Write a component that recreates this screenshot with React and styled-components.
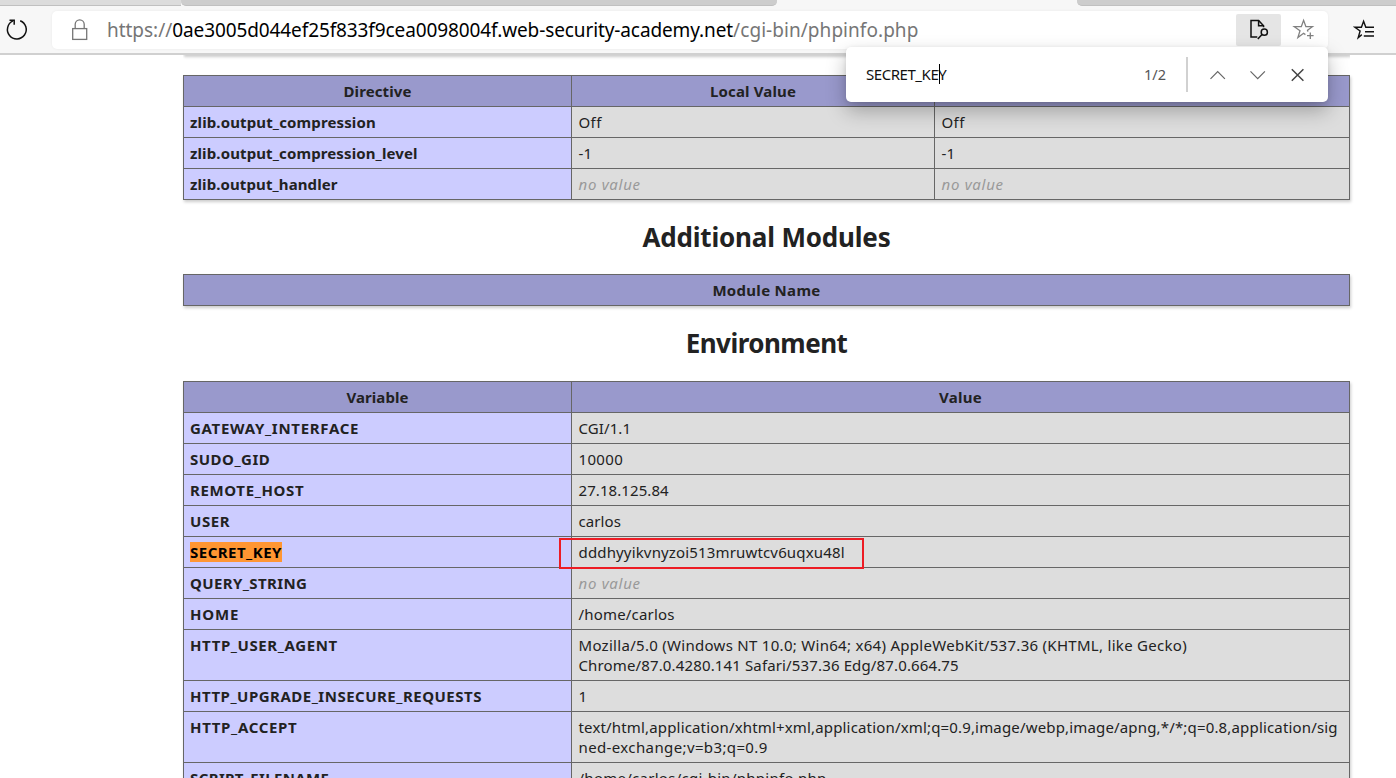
import React from 'react';
import styled, { createGlobalStyle } from 'styled-components';

const GlobalStyle = createGlobalStyle`
  * { box-sizing: border-box; }
  body {
    margin: 0;
    background: #fff;
    color: #222;
    font: 15px/20px "Noto Sans", "Open Sans", sans-serif;
    overflow: hidden;
  }
`;

const Browser = styled.div`
  width: 1396px;
  height: 778px;
  display: flex;
  flex-direction: column;
  overflow: hidden;
  position: relative;
`;

const TabStrip = styled.div`
  flex: none;
  height: 6px;
  display: flex;
  background: #f7f7f7;
`;

const Tab = styled.div`
  width: ${(p) => p.$width};
  height: 6px;
  background: ${(p) => p.$color};
  border-bottom: 1px solid ${(p) => p.$edge || '#c0c0c0'};
  border-radius: ${(p) => p.$radius || 0};
`;

const Toolbar = styled.header`
  flex: none;
  height: 49px;
  display: flex;
  align-items: flex-start;
  padding: 5px 0 0 5px;
  background: #f7f7f7;
  border-bottom: 2px solid #d0d0d0;
`;

const AddressBar = styled.div`
  width: 1276px;
  height: 38px;
  margin-left: 23px;
  padding: 0 12px 0 18px;
  display: flex;
  align-items: center;
  background: #fff;
  border-radius: 5px;
  box-shadow: 0 0 3px rgba(0, 0, 0, 0.06);
`;

const Url = styled.div`
  flex: 1;
  margin-left: 17px;
  font-size: 19px;
  line-height: 26px;
  white-space: nowrap;
  color: #767676;
`;

const UrlPart = styled.span`
  letter-spacing: ${(p) => p.$spacing}px;
  color: ${(p) => (p.$host ? '#000' : 'inherit')};
`;

const FindToggle = styled.div`
  width: 45px;
  height: 32px;
  margin-right: 11px;
  display: flex;
  align-items: center;
  justify-content: center;
  background: #e5e5e5;
  border-radius: 2px;
`;

const ReloadIcon = styled.svg`
  flex: none;
  margin-top: 7px;
`;

const FavoritesIcon = styled.svg`
  flex: none;
  margin: 8px 0 0 25px;
`;

const FindBar = styled.div`
  position: absolute;
  z-index: 2;
  left: 846px;
  top: 47px;
  width: 482px;
  height: 55px;
  padding: 0 20px;
  display: flex;
  align-items: center;
  background: #fff;
  border-radius: 5px;
  box-shadow: 0 9px 20px rgba(0, 0, 0, 0.28), 0 1px 4px rgba(0, 0, 0, 0.1);
`;

const FindText = styled.div`
  position: relative;
  flex: 1;
  padding-bottom: 2px;
  color: #111;
  font-size: 15px;
  letter-spacing: -0.45px;
`;

const Caret = styled.i`
  position: absolute;
  left: 73px;
  top: 0;
  width: 1px;
  height: 20px;
  background: #000;
`;

const FindCount = styled.div`
  padding-bottom: 2px;
  color: #555;
  font-size: 14.5px;
`;

const FindDivider = styled.div`
  width: 2px;
  height: 35px;
  margin: 0 20px;
  background: #d1d1d1;
`;

const FindActions = styled.div`
  display: flex;
  gap: 20px;
`;

const Page = styled.main`
  flex: none;
  width: 1167px;
  margin-left: 183px;
`;

const PreviousTableEdge = styled.div`
  height: 20px;
  overflow: hidden;

  &::before {
    content: '';
    display: block;
    height: 10px;
    margin-top: -10px;
    box-shadow: 1px 2px 3px #ccc;
  }
`;

const Table = styled.table`
  width: ${(p) => p.$width || 1166}px;
  table-layout: fixed;
  border-collapse: collapse;
  box-shadow: 1px 2px 3px #ccc;
`;

const Cell = styled.td`
  padding: 5px 6.5px;
  border: 1px solid #666;
  background: #ddd;
  vertical-align: top;
  white-space: nowrap;
`;

const NameCell = styled(Cell)`
  padding-left: 6px;
  background: #ccf;
  font-weight: 700;
`;

const HeadCell = styled(Cell).attrs({ as: 'th' })`
  background: #99c;
  font-weight: 700;
  text-align: center;
`;

const Label = styled.span`
  letter-spacing: ${(p) => p.$spacing || 0}px;
`;

const Line = styled(Label)`
  display: block;
`;

const NoValue = styled.i`
  color: #999;
  letter-spacing: 0.7px;
`;

const Match = styled.mark`
  display: inline-block;
  height: 20px;
  background: #ff9632;
  color: #000;
  letter-spacing: 0.48px;
`;

const Title = styled.h2`
  height: ${(p) => p.$height}px;
  margin: 0;
  padding-top: 20px;
  font-size: 26px;
  line-height: 35px;
  text-align: center;
  letter-spacing: ${(p) => p.$spacing}px;
`;

const Outline = styled.div`
  position: absolute;
  left: 559px;
  top: 538px;
  width: 305px;
  height: 31px;
  border: 2px solid #ed1c24;
`;

const zlibRows = [
  { name: 'zlib.output_compression', spacing: 0.13, value: 'Off', valueSpacing: 0.4 },
  { name: 'zlib.output_compression_level', spacing: 0.12, value: '-1', valueSpacing: 0.2 },
  { name: 'zlib.output_handler', spacing: 0.1 },
];

const environmentRows = [
  { name: 'GATEWAY_INTERFACE', spacing: 0.71, lines: [['CGI/1.1', 0.1]] },
  { name: 'SUDO_GID', spacing: 0.5, lines: [['10000', 0.35]] },
  { name: 'REMOTE_HOST', spacing: 0.64, lines: [['27.18.125.84', 0.08]] },
  { name: 'USER', spacing: 0.6, lines: [['carlos', 0.1]] },
  { name: 'SECRET_KEY', match: true, lines: [['dddhyyikvnyzoi513mruwtcv6uqxu48l', 0.155]] },
  { name: 'QUERY_STRING', spacing: 0.39 },
  { name: 'HOME', spacing: 0.8, lines: [['/home/carlos', 0.18]] },
  {
    name: 'HTTP_USER_AGENT',
    spacing: 0.6,
    lines: [
      ['Mozilla/5.0 (Windows NT 10.0; Win64; x64) AppleWebKit/537.36 (KHTML, like Gecko)', 0.29],
      ['Chrome/87.0.4280.141 Safari/537.36 Edg/87.0.664.75', 0.14],
    ],
  },
  { name: 'HTTP_UPGRADE_INSECURE_REQUESTS', spacing: 0.5, lines: [['1', 0]] },
  {
    name: 'HTTP_ACCEPT',
    spacing: 0.67,
    lines: [
      ['text/html,application/xhtml+xml,application/xml;q=0.9,image/webp,image/apng,*/*;q=0.8,application/sig', 0.164],
      ['ned-exchange;v=b3;q=0.9', 0.38],
    ],
  },
  { name: 'SCRIPT_FILENAME', spacing: 0.38, lines: [['/home/carlos/cgi-bin/phpinfo.php', 0.27]] },
];

function ValueCell({ value, spacing }) {
  return <Cell>{value ? <Label $spacing={spacing}>{value}</Label> : <NoValue>no value</NoValue>}</Cell>;
}

export default function App() {
  return (
    <Browser>
      <GlobalStyle />
      <TabStrip>
        <Tab $width="181px" $color="#dcdcdc" />
        <Tab $width="596px" $color="#cdcdcd" $radius="0 0 5px 5px" />
        <Tab $width="300px" $color="#f7f7f7" $edge="#f7f7f7" />
        <Tab $width="319px" $color="#cdcdcd" $radius="0 0 0 5px" />
      </TabStrip>

      <Toolbar>
        <ReloadIcon width="24" height="24" viewBox="0 0 24 24" fill="none" stroke="#111" strokeWidth="1.5">
          <path d="M15.2 2.7 A9.4 9.4 0 1 1 8 2.9" />
          <path d="M4.5 2.2 H9.2 V6.8" />
        </ReloadIcon>
        <AddressBar>
          <svg width="20" height="24" viewBox="0 0 20 24" fill="none" stroke="#767676" strokeWidth="1.3">
            <rect x="2.7" y="10.6" width="14" height="10.8" />
            <path d="M5.2 10.6 V6.3 A4.5 4.5 0 0 1 14.2 6.3 V10.6" />
          </svg>
          <Url>
            <UrlPart $spacing={-0.03}>https://</UrlPart>
            <UrlPart $host $spacing={-0.105}>0ae3005d044ef25f833f9cea0098004f.web-security-academy.net</UrlPart>
            <UrlPart $spacing={0.05}>/cgi-bin/phpinfo.php</UrlPart>
          </Url>
          <FindToggle>
            <svg width="22" height="22" viewBox="0 0 22 22" fill="none" stroke="#111" strokeWidth="1.5">
              <path d="M9.3 17.9 H3 V1.5 H10.6 L15.6 6.7 V8.3" />
              <path d="M10.6 1.5 V6.7 H15.6" />
              <circle cx="16.3" cy="13.2" r="3.1" />
              <path d="M14 15.4 L9.8 20.1" />
            </svg>
          </FindToggle>
          <svg width="24" height="24" viewBox="0 0 24 24" fill="none" stroke="#808080" strokeWidth="1.3">
            <path d="M13.4 16.6 L11.6 15.3 L5.9 19.5 L8 12.7 L2.3 8.7 H9.3 L11.6 2.4 L13.9 8.7 H20.4 L15.5 12.3 L15.9 13.6" />
            <path d="M18.3 14.4 V21 M15 17.7 H21.6" />
          </svg>
        </AddressBar>
        <FavoritesIcon width="24" height="24" viewBox="0 0 24 24" fill="none" stroke="#111" strokeWidth="1.4">
          <path d="M8.8 15.6 L5.2 18.7 L7.1 12 L2 8.3 H8.4 L10.6 2.2 L12.8 8.3 H21" />
          <path d="M12 12.8 H21 M10.8 17 H21" />
        </FavoritesIcon>
      </Toolbar>

      <Page>
        <PreviousTableEdge />
        <Table>
          <colgroup>
            <col width="388" />
            <col width="363" />
            <col width="415" />
          </colgroup>
          <tbody>
            <tr>
              <HeadCell><Label $spacing={0.1}>Directive</Label></HeadCell>
              <HeadCell><Label $spacing={0.15}>Local Value</Label></HeadCell>
              <HeadCell />
            </tr>
            {zlibRows.map((row) => (
              <tr key={row.name}>
                <NameCell><Label $spacing={row.spacing}>{row.name}</Label></NameCell>
                <ValueCell value={row.value} spacing={row.valueSpacing} />
                <ValueCell value={row.value} spacing={row.valueSpacing} />
              </tr>
            ))}
          </tbody>
        </Table>

        <Title $height={74} $spacing={-0.18}>Additional Modules</Title>
        <Table $width={1167}>
          <tbody>
            <tr>
              <HeadCell><Label $spacing={0.3}>Module Name</Label></HeadCell>
            </tr>
          </tbody>
        </Table>

        <Title $height={75} $spacing={-0.53}>Environment</Title>
        <Table>
          <colgroup>
            <col width="388" />
            <col width="778" />
          </colgroup>
          <tbody>
            <tr>
              <HeadCell><Label $spacing={0.08}>Variable</Label></HeadCell>
              <HeadCell><Label $spacing={0.3}>Value</Label></HeadCell>
            </tr>
            {environmentRows.map((row) => (
              <tr key={row.name}>
                <NameCell>
                  {row.match ? <Match>{row.name}</Match> : <Label $spacing={row.spacing}>{row.name}</Label>}
                </NameCell>
                <Cell>
                  {row.lines ? (
                    row.lines.map(([text, spacing]) => <Line key={text} $spacing={spacing}>{text}</Line>)
                  ) : (
                    <NoValue>no value</NoValue>
                  )}
                </Cell>
              </tr>
            ))}
          </tbody>
        </Table>
      </Page>

      <Outline />

      <FindBar>
        <FindText>SECRET_KEY<Caret /></FindText>
        <FindCount>1/2</FindCount>
        <FindDivider />
        <FindActions>
          <svg width="20" height="20" viewBox="0 0 20 20" fill="none" stroke="#666" strokeWidth="1.2"><path d="M2.5 13.8 L9.7 6.6 L16.9 13.8" /></svg>
          <svg width="20" height="20" viewBox="0 0 20 20" fill="none" stroke="#666" strokeWidth="1.2"><path d="M2.5 6.4 L9.7 13.6 L16.9 6.4" /></svg>
          <svg width="20" height="20" viewBox="0 0 20 20" fill="none" stroke="#444" strokeWidth="1.5"><path d="M3.8 4.2 L15.4 15.8 M15.4 4.2 L3.8 15.8" /></svg>
        </FindActions>
      </FindBar>
    </Browser>
  );
}
